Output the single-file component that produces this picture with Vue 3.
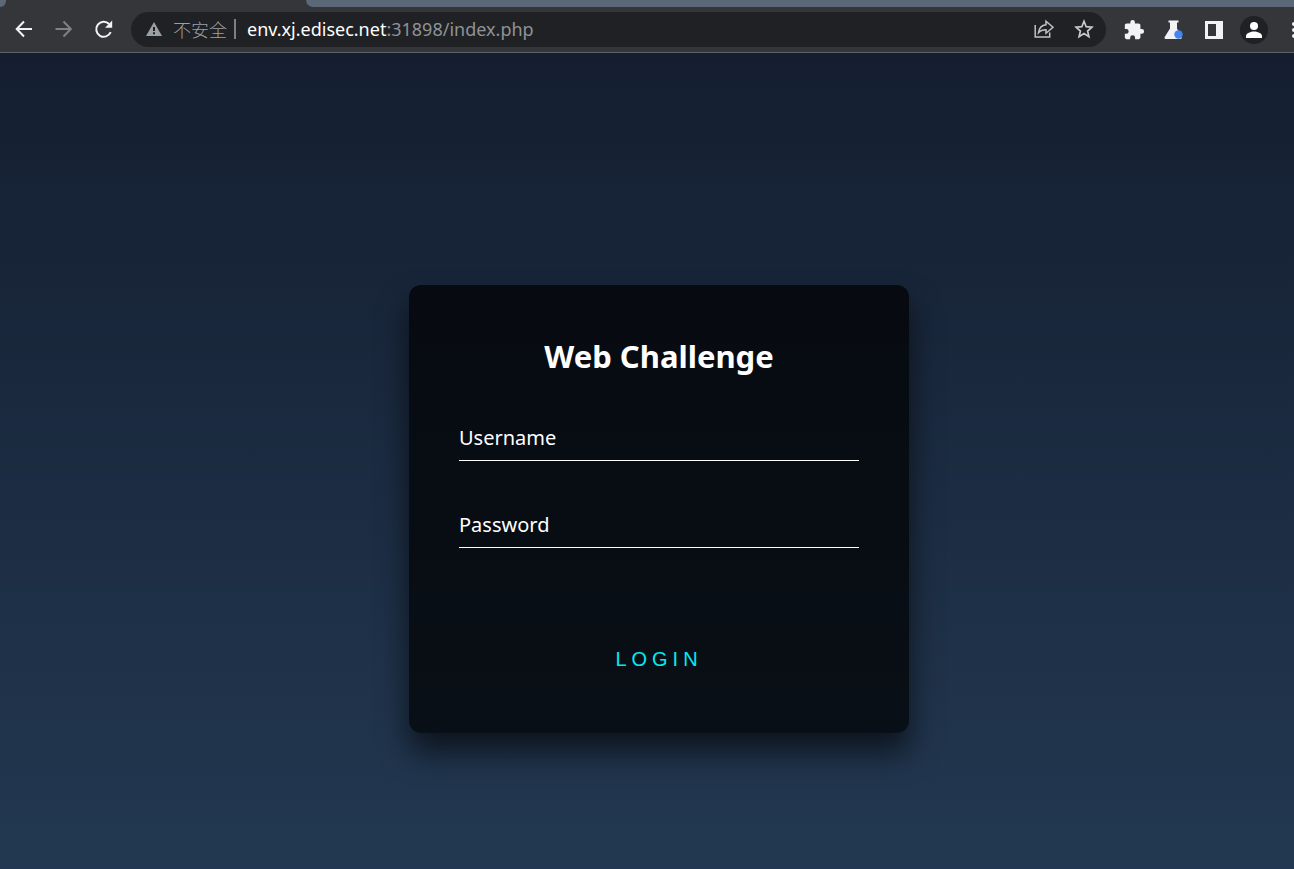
<script setup>
import { ref } from "vue";
const username = ref("");
const password = ref("");
</script>

<template>
  <div class="browser">
    <div class="tabs">
      <span class="tabs__left"></span>
      <span class="tabs__active"></span>
      <span class="tabs__rest"></span>
    </div>

    <header class="toolbar">
      <nav class="toolbar__nav">
        <button type="button" class="tool" aria-label="Back">
          <svg width="24" height="24" viewBox="0 0 24 24" fill="none" stroke="#f1f3f4" stroke-width="2">
            <path d="M20 12H5M12 4.500L4.700 12l7.300 7.500" />
          </svg>
        </button>
        <button type="button" class="tool" aria-label="Forward">
          <svg width="24" height="24" viewBox="0 0 24 24" fill="none" stroke="#7f8184" stroke-width="2">
            <path d="M3.500 12h15M11.500 4.500l7.300 7.500-7.300 7.500" />
          </svg>
        </button>
        <button type="button" class="tool" aria-label="Reload">
          <svg width="24" height="24" viewBox="0 0 24 24">
            <path d="M18.700 15.200A7.500 7.500 0 1 1 17.100 7" fill="none" stroke="#f1f3f4" stroke-width="2" />
            <path d="M20.200 3.500v7.200h-7.200z" fill="#f1f3f4" />
          </svg>
        </button>
      </nav>

      <div class="omnibox">
        <svg class="omnibox__warn" width="18" height="18" viewBox="0 0 18 18">
          <path d="M9 2L17 16H1z" fill="#9aa0a6" />
          <path d="M8 7h2v4H8zM8 12.200h2v2H8z" fill="#202124" />
        </svg>
        <span class="omnibox__state">不安全</span>
        <span class="omnibox__bar"></span>
        <span class="omnibox__url"><b>env.xj.edisec.net</b>:31898/index.php</span>
        <button type="button" class="tool" aria-label="Share">
          <svg width="24" height="24" viewBox="0 0 24 24" fill="none" stroke="#c0c2c5" stroke-width="1.500">
            <path d="M3.200 8v12h14.500v-4.500" />
            <path d="M14 4.200l7 6-7 6v-3.500c-3.600 0-5.700.9-7.500 3 .5-4.200 2.800-7.500 7.500-8z" />
          </svg>
        </button>
        <button type="button" class="tool" aria-label="Bookmark">
          <svg width="24" height="24" viewBox="0 0 24 24" fill="none" stroke="#c8cacc" stroke-width="1.700">
            <path d="M12 4.300l2.200 5.400 5.700.5-4.300 3.800 1.300 5.600-4.900-3-4.900 3 1.300-5.600-4.300-3.800 5.700-.5z" />
          </svg>
        </button>
      </div>

      <div class="toolbar__extras">
        <button type="button" class="tool" aria-label="Extensions">
          <svg width="22" height="22" viewBox="0 0 24 24" fill="#f1f3f4">
            <path d="M20.500 11H19V7c0-1.100-.9-2-2-2h-4V3.500a2.500 2.500 0 0 0-5 0V5H4c-1.100 0-2 .9-2 2v3.800h1.500a2.700 2.700 0 0 1 0 5.400H2V20c0 1.100.9 2 2 2h3.800v-1.500a2.700 2.700 0 0 1 5.400 0V22H17c1.100 0 2-.9 2-2v-4h1.500a2.500 2.500 0 0 0 0-5z" />
          </svg>
        </button>
        <button type="button" class="tool" aria-label="Experiments">
          <svg width="22" height="22" viewBox="0 0 22 22">
            <path d="M5.500 1.500h10v2H14v6l4.500 8.500c.5 1-.1 2-1.200 2H2.700c-1 0-1.600-1.100-1-2L7 9.500v-6H5.500z" fill="#f1f3f4" />
            <circle cx="15.500" cy="15.500" r="4.200" fill="#4285f4" />
          </svg>
        </button>
        <button type="button" class="tool" aria-label="Side panel">
          <svg width="20" height="20" viewBox="0 0 20 20">
            <path d="M1 1h18v18H1zM4 4v12h8V4z" fill="#f1f3f4" fill-rule="evenodd" />
          </svg>
        </button>
        <button type="button" class="tool" aria-label="Profile">
          <svg width="28" height="28" viewBox="0 0 28 28">
            <circle cx="14" cy="14" r="14" fill="#202124" />
            <circle cx="14" cy="10" r="4" fill="#fff" />
            <path d="M6 22v-2c0-3 5-4.500 8-4.500s8 1.500 8 4.500v2z" fill="#fff" />
          </svg>
        </button>
        <button type="button" class="tool" aria-label="Menu">
          <svg width="24" height="24" viewBox="0 0 24 24" fill="#f1f3f4">
            <circle cx="12" cy="6" r="2" />
            <circle cx="12" cy="12" r="2" />
            <circle cx="12" cy="18" r="2" />
          </svg>
        </button>
      </div>
    </header>

    <main class="page">
      <form class="login" @submit.prevent>
        <h1>Web Challenge</h1>
        <div class="field">
          <input id="username" v-model="username" type="text" required />
          <label for="username">Username</label>
        </div>
        <div class="field">
          <input id="password" v-model="password" type="password" required />
          <label for="password">Password</label>
        </div>
        <button type="submit" class="login__submit">LOGIN</button>
      </form>
    </main>
  </div>
</template>

<style>
body {
  margin: 0;
  background: #141e30;
}
</style>

<style scoped>
.browser {
  display: flex;
  flex-direction: column;
  min-height: 100vh;
  overflow: hidden;
  font-family: "Noto Sans", "Noto Sans CJK SC", sans-serif;
}
.tabs {
  display: flex;
  height: 7px;
  background: #35363a;
}
.tabs__left {
  width: 6px;
  background: #5b6878;
  border-bottom-right-radius: 6px;
}
.tabs__active {
  width: 300px;
}
.tabs__rest {
  flex: 1;
  background: #5b6878;
  border-bottom-left-radius: 7px;
}
.toolbar {
  display: flex;
  align-items: center;
  height: 45px;
  padding-left: 4px;
  background: #35363a;
  border-bottom: 1px solid #5f6063;
}
.toolbar__nav {
  display: flex;
  margin-right: 7px;
  padding-bottom: 2px;
}
.toolbar__extras {
  display: flex;
  flex: 0 0 180px;
  margin-left: 8px;
  overflow: hidden;
}
.tool {
  display: flex;
  flex: 0 0 40px;
  align-items: center;
  justify-content: center;
  width: 40px;
  height: 35px;
  padding: 0;
  border: 0;
  background: none;
}
.omnibox {
  display: flex;
  flex: 1;
  align-items: center;
  box-sizing: border-box;
  min-width: 0;
  height: 35px;
  padding: 0 2px 1px 14px;
  border-radius: 18px;
  background: #202124;
  color: #9aa0a6;
  font-size: 18px;
  line-height: 24px;
  white-space: nowrap;
}
.omnibox__state {
  margin-left: 10px;
  font-family: "Noto Sans CJK SC", sans-serif;
  font-weight: 300;
}
.omnibox__bar {
  width: 2px;
  height: 20px;
  margin: 0 11px 0 7px;
  background: #7c7f83;
}
.omnibox__url {
  flex: 1;
  overflow: hidden;
  color: #8f9296;
}
.omnibox__url b {
  color: #fff;
  font-weight: 400;
}
.page {
  display: flex;
  flex: 1;
  align-items: center;
  justify-content: center;
  padding: 96px 0 0 24px;
  background: linear-gradient(#141e30, #243b55) top / 100% 112% no-repeat;
}
.login {
  display: flex;
  flex-direction: column;
  box-sizing: border-box;
  width: 500px;
  max-width: 100%;
  padding: 50px;
  border-radius: 12px;
  background: rgba(0, 0, 0, 0.7);
  box-shadow: 0 19px 31px rgba(0, 0, 0, 0.6);
}
h1 {
  margin: 0 0 34px;
  color: #fff;
  font-size: 31px;
  font-weight: 700;
  line-height: 42px;
  text-align: center;
}
.field {
  position: relative;
  margin-bottom: 37px;
}
.field input {
  display: block;
  box-sizing: border-box;
  width: 100%;
  height: 50px;
  padding: 12px 0;
  border: 0;
  border-bottom: 1px solid #fff;
  border-radius: 0;
  outline: none;
  background: transparent;
  color: #fff;
  font: inherit;
  font-size: 20px;
}
.field label {
  position: absolute;
  top: 0;
  left: 0;
  padding: 12px 0;
  color: #fff;
  font-size: 20px;
  line-height: 30px;
  pointer-events: none;
  transition: 0.5s;
}
.field input:focus ~ label,
.field input:valid ~ label {
  top: -25px;
  color: #03e9f4;
  font-size: 15px;
}
.login__submit {
  align-self: center;
  height: 48px;
  margin-top: 50px;
  padding: 0 25px;
  border: 0;
  background: none;
  color: #03e9f4;
  font-family: "Liberation Sans", Arial, sans-serif;
  font-size: 20px;
  letter-spacing: 5px;
  cursor: pointer;
}
</style>
